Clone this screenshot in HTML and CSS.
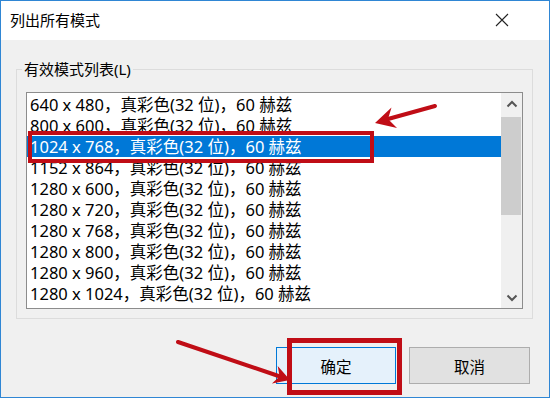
FILE: index.html
```html
<!DOCTYPE html>
<html lang="zh-CN">
<head>
    <meta charset="UTF-8">
    <meta name="viewport" content="width=device-width, initial-scale=1.0">
    <title>列出所有模式</title>
    <link rel="stylesheet" href="styles.css">
</head>
<body>
    <div class="dialog">
        <div class="titlebar">
            <span class="title">列出所有模式</span>
            <svg class="close" width="14" height="14" viewBox="0 0 14 14">
                <path d="M1 1 L13 13 M13 1 L1 13" stroke="#222" stroke-width="1.1" fill="none"/>
            </svg>
        </div>

        <div class="content">
            <fieldset class="group">
                <legend>有效模式列表(L)</legend>
                <div class="listbox">
                    <ul class="rows">
                        <li>640 x 480，真彩色(32 位)，60 赫兹</li>
                        <li>800 x 600，真彩色(32 位)，60 赫兹</li>
                        <li class="selected">1024 x 768，真彩色(32 位)，60 赫兹</li>
                        <li>1152 x 864，真彩色(32 位)，60 赫兹</li>
                        <li>1280 x 600，真彩色(32 位)，60 赫兹</li>
                        <li>1280 x 720，真彩色(32 位)，60 赫兹</li>
                        <li>1280 x 768，真彩色(32 位)，60 赫兹</li>
                        <li>1280 x 800，真彩色(32 位)，60 赫兹</li>
                        <li>1280 x 960，真彩色(32 位)，60 赫兹</li>
                        <li>1280 x 1024，真彩色(32 位)，60 赫兹</li>
                    </ul>
                    <div class="scrollbar">
                        <div class="arrow">
                            <svg width="12" height="8" viewBox="0 0 12 8"><polyline points="1.5,6.5 6,2 10.5,6.5" stroke="#555" stroke-width="2" fill="none"/></svg>
                        </div>
                        <div class="thumb"></div>
                        <div class="arrow arrow-down">
                            <svg width="12" height="8" viewBox="0 0 12 8"><polyline points="1.5,1.5 6,6 10.5,1.5" stroke="#555" stroke-width="2" fill="none"/></svg>
                        </div>
                    </div>
                </div>
            </fieldset>

            <div class="buttons">
                <button class="btn btn-default">确定</button>
                <button class="btn">取消</button>
            </div>
        </div>
    </div>

    <!-- red annotations drawn over the dialog -->
    <svg class="marks" width="550" height="400" viewBox="0 0 550 400">
        <rect x="30" y="133" width="342" height="28" fill="none" stroke="#c00d16" stroke-width="4"/>
        <rect x="289.5" y="340.5" width="110" height="52" fill="none" stroke="#c00d16" stroke-width="5"/>
        <line x1="435" y1="106" x2="388" y2="119" stroke="#c00d16" stroke-width="4" stroke-linecap="round"/>
        <polygon points="375,123 391.5,107.5 388,119 397,128" fill="#c00d16"/>
        <line x1="178" y1="342" x2="280" y2="376.5" stroke="#c00d16" stroke-width="4" stroke-linecap="round"/>
        <polygon points="290,380 277.7,366 279.6,376.5 271.9,383.4" fill="#c00d16"/>
    </svg>
</body>
</html>
```

FILE: styles.css
```css
body {
    margin: 0;
    background-color: #ffffff;
    font-family: "Noto Sans", "Noto Sans CJK SC", sans-serif;
    color: #000;
}
.dialog {
    width: 548px;
    height: 396px;
    border: 1px solid #2f86d4;
    background-color: #f0f0f0;
    display: flex;
    flex-direction: column;
}
.titlebar {
    height: 39px;
    background-color: #fff;
    display: flex;
    align-items: center;
    justify-content: space-between;
    padding: 0 40px 0 9px;
}
.title {
    font-size: 15px;
    margin-top: -2px;
}
.close {
    margin-top: -1px;
}
.content {
    padding: 20px 16px 0 15px;
}
.group {
    margin: 0;
    padding: 13px 9px 9px 9px;
    border: 1px solid #dcdcdc;
    min-width: 0;
}
.group legend {
    font-size: 15px;
    line-height: 19px;
    padding: 0 2px;
    margin-left: -4px;
}
.listbox {
    height: 215px;
    border: 1px solid #8c8c8c;
    background-color: #fff;
    display: flex;
}
.rows {
    flex: 1;
    list-style: none;
    margin: 0;
    padding: 1px 0 0 0;
    font-size: 16.5px;
}
.rows li {
    height: 21px;
    line-height: 21px;
    padding-left: 3px;
    white-space: nowrap;
}
.rows li.selected {
    background-color: #0078d7;
    color: #fff;
}
.scrollbar {
    width: 21px;
    background-color: #f0f0f0;
    display: flex;
    flex-direction: column;
}
.arrow {
    height: 21px;
    display: flex;
    align-items: center;
    justify-content: center;
}
.thumb {
    height: 98px;
    margin: 3px 1px 0 0;
    background-color: #cdcdcd;
}
.arrow-down {
    margin-top: auto;
}
.buttons {
    display: flex;
    justify-content: flex-end;
    gap: 13px;
    margin-top: 28px;
    padding-right: 3px;
}
.btn {
    width: 121px;
    height: 37px;
    font-family: "Noto Sans CJK SC", sans-serif;
    font-size: 15.5px;
    color: #000;
    background-color: #e1e1e1;
    border: 1px solid #adadad;
    padding: 0;
}
.btn-default {
    width: 120px;
    background-color: #e5f1fb;
    border-color: #0078d7;
}
.marks {
    position: absolute;
    top: 0;
    left: 0;
}
```
